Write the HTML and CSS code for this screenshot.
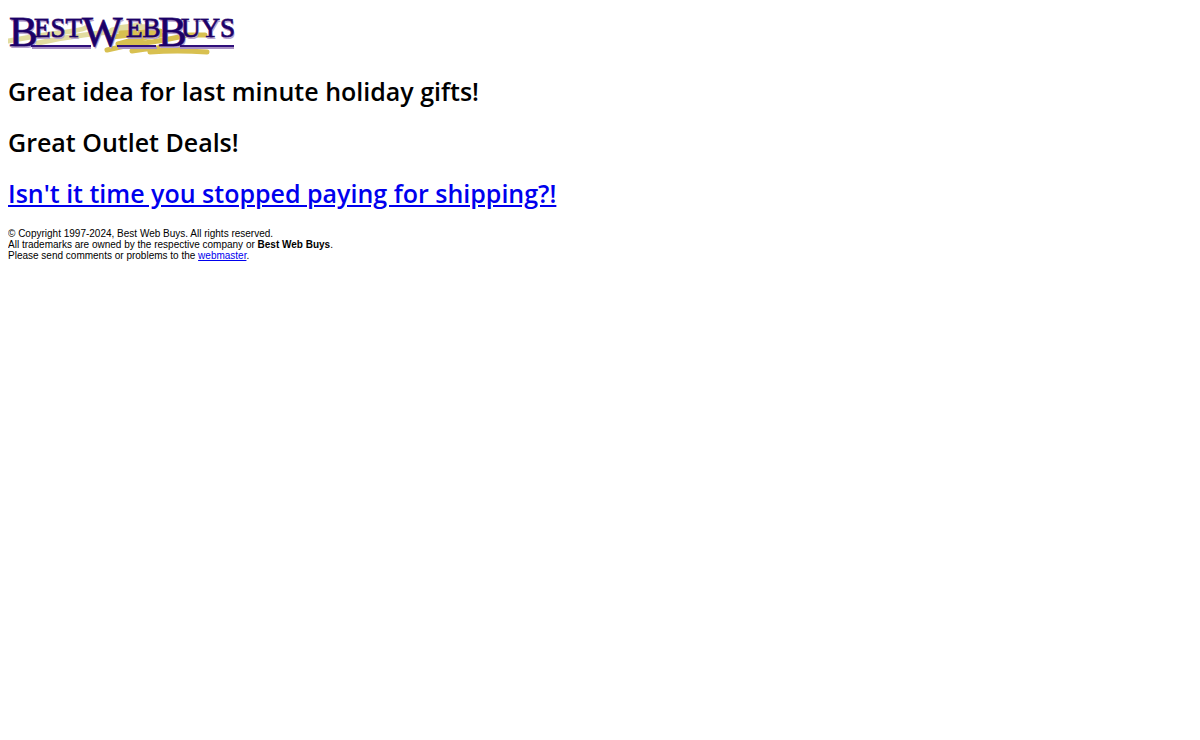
FILE: index.html
```html
<!DOCTYPE html>
<html lang="en">
<head>
  <meta charset="UTF-8">
  <meta name="viewport" content="width=device-width, initial-scale=1.0">
  <title>Best Web Buys</title>
  <link rel="stylesheet" href="styles.css">
</head>
<body>
  <a class="logo" href="#" aria-label="Best Web Buys">
    <svg width="230" height="50" viewBox="0 0 230 50" xmlns="http://www.w3.org/2000/svg">
      <defs>
        <g id="wordmark">
          <text class="big" x="1" y="38">B</text>
          <text class="small" x="26" y="29">EST</text>
          <text class="big" x="74" y="38">W</text>
          <text class="small" x="118" y="29">EB</text>
          <text class="big" x="150" y="38">B</text>
          <text class="small" x="173" y="29">UYS</text>
        </g>
      </defs>
      <!-- brush strokes -->
      <g class="brush">
        <path class="pale" d="M0 33Q26 28 50 25T77 20M30 35Q52 30 76 27T119 22M104 22Q125 17 145 19M109 20L132 17"/>
        <path class="gold" d="M99 42Q118 37 136 35T180 27L197 27M110 36Q126 31 153 27M104 29L150 24M113 25L152 23"/>
        <path class="gold" d="M124 43Q148 39 173 39M142 44Q168 42 199 44"/>
      </g>
      <path class="rule-shadow" d="M24 40H83M110 40H149M172 40H226"/>
      <use href="#wordmark" class="shadow" x="1" y="2"/>
      <use href="#wordmark" class="front"/>
      <path class="rule" d="M23 38H83M109 38H148M172 38H226"/>
    </svg>
  </a>

  <h2>Great idea for last minute holiday gifts!</h2>
  <h2>Great Outlet Deals!</h2>
  <h2><a href="#">Isn't it time you stopped paying for shipping?!</a></h2>

  <p class="copyright">
    © Copyright 1997-2024, Best Web Buys. All rights reserved.<br>
    All trademarks are owned by the respective company or <b>Best Web Buys</b>.<br>
    Please send comments or problems to the <a href="#">webmaster</a>.
  </p>
</body>
</html>
```
FILE: styles.css
```css
body {
  margin: 8px;
  background-color: #fff;
  color: #000;
  font-family: "Open Sans", "Noto Sans", sans-serif;
}

a {
  color: #0000ee;
}

.logo svg {
  display: block;
}

.big,
.small {
  font-family: "Liberation Serif", serif;
}

.big {
  font-size: 43px;
}

.small {
  font-size: 27px;
}

.rule,
.rule-shadow {
  stroke-width: 2px;
}

.rule {
  stroke: #30107c;
}

.rule-shadow {
  stroke: #a890c4;
}

.shadow {
  fill: #b8a4d0;
}

.front {
  fill: #1c0068;
  stroke: #1c0068;
  stroke-opacity: 0.8;
}

.brush {
  fill: none;
  stroke-width: 5px;
  stroke-linecap: round;
}

.pale {
  stroke: #e2dca0;
}

.gold {
  stroke: #d8c050;
}

h2 {
  margin: 16px 0;
  font-size: 25px;
  font-weight: 600;
  line-height: 35px;
}

.copyright {
  margin: 0;
  padding-top: 1px;
  font-family: "Liberation Sans", Arial, sans-serif;
  font-size: 10px;
  line-height: 11px;
}
```
